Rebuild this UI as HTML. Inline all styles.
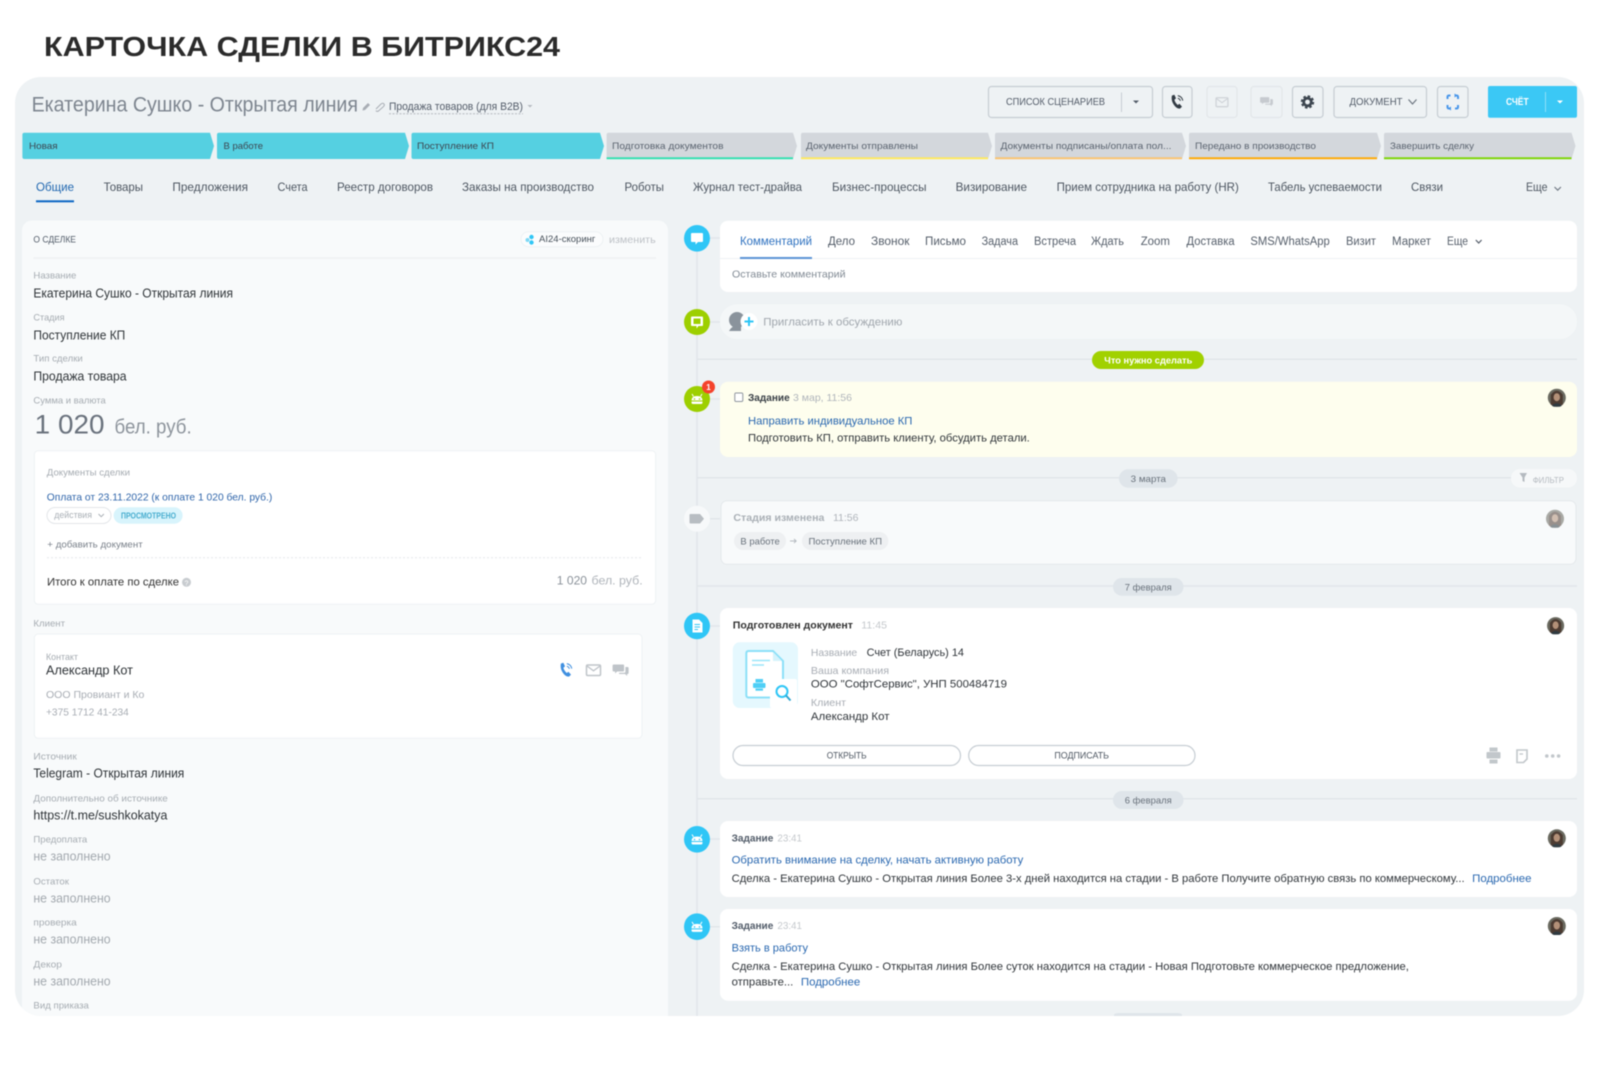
<!DOCTYPE html>
<html lang="ru"><head><meta charset="utf-8"><title>Карточка сделки</title>
<style>
html,body{margin:0;padding:0;background:#fff;width:1600px;height:1074px;overflow:hidden}
svg{display:block;filter:blur(.4px)}
text{font-family:"Liberation Sans","Noto Sans CJK SC",sans-serif;white-space:pre}
.lb{font-size:9.5px;fill:#a6acb2}
.v{font-size:12.5px;fill:#2f3438}
.n{font-size:12.5px;fill:#a2a8ae}
.st{font-size:9.5px;fill:#3c4650}
.tb{font-size:12px;fill:#4d5661}
.ct{font-size:11.5px;fill:#555e6a}
.t{font-size:11px;fill:#30353a}
.bl{font-size:11px;fill:#2a68b0}
.h{font-size:10.5px;font-weight:bold;fill:#3a4047}
.g{font-size:10.5px;fill:#b0b5bb}
.d{font-size:9.5px;fill:#68717b}
.bt{font-size:9.5px;fill:#4d5661}
</style></head><body>
<svg xmlns="http://www.w3.org/2000/svg" width="1600" height="1074" viewBox="0 0 1600 1074">
<defs>
<clipPath id="pc"><rect x="15" y="77" width="1569" height="939" rx="26"/></clipPath>
<g id="ph"><path d="M-5-6.5-2.6-7.2-1-3.6-2.6-2.2C-2.2-.2-.8 1.8.8 3L2.4 1.8 5 4.6 3 6.6C-1 7.2-6.8 0-5-6.5Z"/><path d="M.8-6.4A6.4 6.4 0 0 1 5.8-1.4M.8-3.8A3.8 3.8 0 0 1 3.4-1.2" fill="none" stroke="currentColor" stroke-width="1"/></g>
<g id="ml"><rect x="-7" y="-5" width="14" height="10.500" rx="1.200" fill="none" stroke="currentColor" stroke-width="1.500"/><path d="M-6.500-4 0 .8 6.500-4" fill="none" stroke="currentColor" stroke-width="1.300"/></g>
<g id="ch"><path d="M-7-5.500H2.500Q3.500-5.500 3.500-4.500V.5Q3.500 1.500 2.500 1.500H-3.500L-5.500 3.500V1.500H-7Q-8 1.500-8 .5V-4.500Q-8-5.500-7-5.500Z"/><path d="M4.800-3H7Q8-3 8-2V3Q8 4 7 4H6.500V6L4.500 4H-1.500V2.800H3.500Q4.800 2.800 4.800 1.500Z"/></g>
<g id="av"><circle r="9" fill="#6a6a60"/><path d="M-6 -3Q0-11 6-3L6 7Q0 10-6 7Z" fill="#4c3b32"/><ellipse cy="-.5" rx="3.200" ry="4" fill="#b39078"/><path d="M-5 8Q0 3 5 8L3 9H-3Z" fill="#2f3a40"/></g>
<g id="rb"><path d="M-5.500 1Q-5.500-3.500 0-3.500T5.500 1V3Q5.500 4.500 4 4.500H-4Q-5.500 4.500-5.500 3Z" fill="#fff"/><path d="M-3.500-3-5-5.500M3.500-3 5-5.500" stroke="#fff" stroke-width="1" fill="none"/><circle cx="-2.500" cy="-.5" r=".8" fill="currentColor"/><circle cx="2.500" cy="-.5" r=".8" fill="currentColor"/><rect x="-5.500" y="1" width="11" height="1" fill="currentColor"/></g>
</defs>

<text x="44" y="56" textLength="516" lengthAdjust="spacingAndGlyphs" font-size="28" font-weight="bold" fill="#2b2b2b">КАРТОЧКА СДЕЛКИ В БИТРИКС24</text>

<rect x="15" y="77" width="1569" height="939" rx="26" fill="#eef2f4"/>

<!-- header -->
<text x="31.600" y="111.700" textLength="326.400" lengthAdjust="spacingAndGlyphs" font-size="21" fill="#7d858f">Екатерина Сушко - Открытая линия</text>
<path d="M362.500 110.500 363 108 368 103 370 105 365 110Z" fill="#a8adb4"/>
<path d="M376 109 381 104Q383 102.500 384 104T383 107L378.500 111Q376.500 112 376 110.500" fill="none" stroke="#a8adb4" stroke-width="1"/>
<text x="389" y="110" textLength="134" lengthAdjust="spacingAndGlyphs" font-size="11" fill="#535c69">Продажа товаров (для B2B)</text>
<path d="M389 113.700H523" stroke="#b5bac0" stroke-width="1" stroke-dasharray="2 1.500"/>
<path d="M527.500 105h5l-2.500 2.500z" fill="#b5bac0"/>

<!-- top buttons -->
<g fill="none" stroke="#c6cdd3" stroke-width="1.200">
<rect x="988.500" y="86.500" width="164" height="31" rx="3"/>
<rect x="1162.500" y="86.500" width="29.500" height="31" rx="3"/>
<rect x="1207" y="86.500" width="30" height="31" rx="3" stroke="#e2e6e9"/>
<rect x="1251" y="86.500" width="31" height="31" rx="3" stroke="#e2e6e9"/>
<rect x="1292.500" y="86.500" width="30.500" height="31" rx="3"/>
<rect x="1334" y="86.500" width="92.500" height="31" rx="3"/>
<rect x="1437.500" y="86.500" width="30.500" height="31" rx="3"/>
</g>
<text x="1006" y="105" textLength="99" lengthAdjust="spacingAndGlyphs" font-size="10" fill="#535c69">СПИСОК СЦЕНАРИЕВ</text>
<path d="M1121.500 92.500V112" stroke="#c6cdd3"/>
<path d="M1133 100.500h6l-3 3z" fill="#535c69"/>
<use href="#ph" x="1177" y="102" fill="#333c45" color="#333c45"/>
<g transform="translate(1222 102) scale(.85)"><use href="#ml" color="#cfd3d8"/></g>
<g transform="translate(1266.500 101.500) scale(.8)"><use href="#ch" fill="#c6cacf"/></g>
<g transform="translate(1307.500 102)" fill="none" stroke="#3d4650"><circle r="3.800" stroke-width="2.800"/><circle r="5.400" stroke-width="2.600" stroke-dasharray="2.400 1.840"/></g>
<text x="1349.500" y="105" textLength="53" lengthAdjust="spacingAndGlyphs" font-size="10" fill="#535c69">ДОКУМЕНТ</text>
<path d="M1408.500 99.500l4 4.500 4-4.500" fill="none" stroke="#6d7681" stroke-width="1.200"/>
<path d="M1447.500 99V97Q1447.500 95.500 1449 95.500H1450.500M1455 95.500H1456.500Q1458 95.500 1458 97V99M1458 105V107Q1458 108.500 1456.500 108.500H1455M1450.500 108.500H1449Q1447.500 108.500 1447.500 107V105" fill="none" stroke="#4a97ea" stroke-width="2"/>
<path d="M1454.500 93.500v4l3-2zM1451 106.500v4l-3-2z" fill="#4a97ea"/>
<rect x="1488" y="86" width="89" height="31.700" rx="2" fill="#3bc8f5"/>
<text x="1506" y="105" textLength="22.600" lengthAdjust="spacingAndGlyphs" font-size="10" font-weight="bold" fill="#fff">СЧЁТ</text>
<path d="M1545.500 92V112" stroke="#8fe0f9"/>
<path d="M1557 100.500h6l-3 3z" fill="#fff"/>

<!-- stages -->
<g fill="#55d0e1">
<path d="M24.400 132.700H210L214 146 210 159H24.400Q22.400 159 22.400 157V134.700Q22.400 132.700 24.400 132.700Z"/>
<path d="M219 132.700H405L409 146 405 159H219Q217 159 217 157V134.700Q217 132.700 219 132.700Z"/>
<path d="M413.500 132.700H600L604 146 600 159H413.500Q411.500 159 411.500 157V134.700Q411.500 132.700 413.500 132.700Z"/>
</g>
<g fill="#d3d7dc">
<path d="M608.600 132.700H793L797 146 793 159H608.600Q606.600 159 606.600 157V134.700Q606.600 132.700 608.600 132.700Z"/>
<path d="M803 132.700H988L992 146 988 159H801V134.700Q801 132.700 803 132.700Z"/>
<path d="M997 132.700H1182L1186 146 1182 159H995V134.700Q995 132.700 997 132.700Z"/>
<path d="M1191 132.700H1377L1381 146 1377 159H1189V134.700Q1189 132.700 1191 132.700Z"/>
<path d="M1386 132.700H1571.500L1575.500 146 1571.500 159H1384V134.700Q1384 132.700 1386 132.700Z"/>
</g>
<rect x="606.600" y="157.300" width="186.400" height="1.900" fill="#2fe0b0"/>
<rect x="801" y="157.300" width="187" height="1.900" fill="#ffe95c"/>
<rect x="995" y="157.300" width="187" height="1.900" fill="#fbc36e"/>
<rect x="1189" y="157.300" width="188" height="1.900" fill="#ffa900"/>
<rect x="1384" y="157.300" width="187.500" height="1.900" fill="#7bd500"/>
<text class="st" x="29" y="149" textLength="28.600" lengthAdjust="spacingAndGlyphs">Новая</text>
<text class="st" x="223.500" y="149" textLength="39.500" lengthAdjust="spacingAndGlyphs">В работе</text>
<text class="st" x="417" y="149" textLength="77" lengthAdjust="spacingAndGlyphs">Поступление КП</text>
<text class="st" x="612" y="149" textLength="111.500" lengthAdjust="spacingAndGlyphs" style="fill:#5b6470">Подготовка документов</text>
<text class="st" x="806" y="149" textLength="112" lengthAdjust="spacingAndGlyphs" style="fill:#5b6470">Документы отправлены</text>
<text class="st" x="1000.500" y="149" textLength="171" lengthAdjust="spacingAndGlyphs" style="fill:#5b6470">Документы подписаны/оплата пол...</text>
<text class="st" x="1195" y="149" textLength="121" lengthAdjust="spacingAndGlyphs" style="fill:#5b6470">Передано в производство</text>
<text class="st" x="1390" y="149" textLength="84" lengthAdjust="spacingAndGlyphs" style="fill:#5b6470">Завершить сделку</text>

<!-- tabs -->
<text class="tb" x="36" y="191" textLength="38" lengthAdjust="spacingAndGlyphs" style="fill:#2067b0">Общие</text>
<rect x="36" y="200.300" width="38" height="2" fill="#0b66c3"/>
<text class="tb" x="103.600" y="191" textLength="39.400" lengthAdjust="spacingAndGlyphs">Товары</text>
<text class="tb" x="172.400" y="191" textLength="75.600" lengthAdjust="spacingAndGlyphs">Предложения</text>
<text class="tb" x="277.500" y="191" textLength="30.100" lengthAdjust="spacingAndGlyphs">Счета</text>
<text class="tb" x="337" y="191" textLength="96" lengthAdjust="spacingAndGlyphs">Реестр договоров</text>
<text class="tb" x="462" y="191" textLength="132" lengthAdjust="spacingAndGlyphs">Заказы на производство</text>
<text class="tb" x="624.500" y="191" textLength="39.500" lengthAdjust="spacingAndGlyphs">Роботы</text>
<text class="tb" x="693" y="191" textLength="109" lengthAdjust="spacingAndGlyphs">Журнал тест-драйва</text>
<text class="tb" x="832" y="191" textLength="94.500" lengthAdjust="spacingAndGlyphs">Бизнес-процессы</text>
<text class="tb" x="955.600" y="191" textLength="71.400" lengthAdjust="spacingAndGlyphs">Визирование</text>
<text class="tb" x="1056.600" y="191" textLength="182.200" lengthAdjust="spacingAndGlyphs">Прием сотрудника на работу (HR)</text>
<text class="tb" x="1268" y="191" textLength="114" lengthAdjust="spacingAndGlyphs">Табель успеваемости</text>
<text class="tb" x="1411" y="191" textLength="32" lengthAdjust="spacingAndGlyphs">Связи</text>
<text class="tb" x="1526" y="191" textLength="21.500" lengthAdjust="spacingAndGlyphs">Еще</text>
<path d="M1554.500 187l3.200 3.200 3.200-3.200" fill="none" stroke="#6d7681" stroke-width="1.100"/>

<!-- left card -->
<g clip-path="url(#pc)">
<rect x="22" y="220.500" width="646" height="830" rx="10" fill="#f8fafb"/>
</g>
<text x="33.400" y="242.700" textLength="42.600" lengthAdjust="spacingAndGlyphs" font-size="9.500" fill="#525c69">О СДЕЛКЕ</text>
<rect x="521" y="231.700" width="82" height="15" rx="7.500" fill="#fbfcfd" stroke="#eef2f4"/>
<circle cx="531.500" cy="237" r="2.200" fill="#2fc6f6"/><circle cx="527.500" cy="240" r="2" fill="#7fd9f5"/><circle cx="531.500" cy="242.500" r="2.200" fill="#2fc6f6"/>
<text x="539" y="242" textLength="56.400" lengthAdjust="spacingAndGlyphs" font-size="9.500" fill="#46505a">AI24-скоринг</text>
<text x="609" y="243" textLength="46.700" lengthAdjust="spacingAndGlyphs" font-size="10.500" fill="#bdc1c6">изменить</text>
<rect x="33.400" y="257.300" width="622.600" height="1.500" fill="#eef0f2"/>

<text class="lb" x="33.400" y="278.700" textLength="42.900" lengthAdjust="spacingAndGlyphs">Название</text>
<text class="v" x="33.400" y="297.300" textLength="199.600" lengthAdjust="spacingAndGlyphs">Екатерина Сушко - Открытая линия</text>
<text class="lb" x="33.400" y="320.700" textLength="31.200" lengthAdjust="spacingAndGlyphs">Стадия</text>
<text class="v" x="33.400" y="339.300" textLength="91.900" lengthAdjust="spacingAndGlyphs">Поступление КП</text>
<text class="lb" x="33.400" y="361.700" textLength="49.400" lengthAdjust="spacingAndGlyphs">Тип сделки</text>
<text class="v" x="33.400" y="380.700" textLength="93.200" lengthAdjust="spacingAndGlyphs">Продажа товара</text>
<text class="lb" x="33.400" y="403.700" textLength="72.400" lengthAdjust="spacingAndGlyphs">Сумма и валюта</text>
<text x="34.700" y="433.300" textLength="69.800" lengthAdjust="spacingAndGlyphs" font-size="26.500" fill="#6a727d">1 020</text>
<text x="114.500" y="433.300" textLength="77.200" lengthAdjust="spacingAndGlyphs" font-size="20" fill="#8d949c">бел. руб.</text>

<rect x="34.300" y="450.700" width="621.400" height="153.600" rx="4" fill="#fff" stroke="#eef2f4"/>
<text class="lb" x="46.800" y="475.700" textLength="83.200" lengthAdjust="spacingAndGlyphs">Документы сделки</text>
<text x="46.800" y="500.300" textLength="225.500" lengthAdjust="spacingAndGlyphs" font-size="10.500" fill="#2f65aa">Оплата от 23.11.2022 (к оплате 1 020 бел. руб.)</text>
<rect x="47" y="507.500" width="64" height="16" rx="8" fill="#fff" stroke="#e3e6e9"/>
<text x="54.200" y="518" textLength="37.800" lengthAdjust="spacingAndGlyphs" font-size="9.500" fill="#aab0b6">действия</text>
<path d="M98.500 514l2.700 2.700 2.700-2.700" fill="none" stroke="#aab0b6"/>
<rect x="113.600" y="507.300" width="69" height="16.400" rx="8.200" fill="#d8f4fc"/>
<text x="121" y="518.500" textLength="55" lengthAdjust="spacingAndGlyphs" font-size="8.500" font-weight="bold" fill="#47adcf">ПРОСМОТРЕНО</text>
<text x="47.300" y="547.700" textLength="95.400" lengthAdjust="spacingAndGlyphs" font-size="9.500" fill="#7b828b">+ добавить документ</text>
<path d="M47 557.700H642.700" stroke="#e6e8ea" stroke-dasharray="2 2"/>
<text x="47" y="585.300" textLength="132" lengthAdjust="spacingAndGlyphs" font-size="11" fill="#333">Итого к оплате по сделке</text>
<circle cx="186.500" cy="582.300" r="4.500" fill="#c8ccd0"/>
<text x="186.500" y="585.300" text-anchor="middle" font-size="7" fill="#fff">?</text>
<text x="556.800" y="584.700" textLength="30.200" lengthAdjust="spacingAndGlyphs" font-size="12" fill="#8b929a">1 020</text>
<text x="591.500" y="584.700" textLength="51.200" lengthAdjust="spacingAndGlyphs" font-size="12" fill="#b0b5bb">бел. руб.</text>

<text class="lb" x="33.400" y="626.700" textLength="31.600" lengthAdjust="spacingAndGlyphs">Клиент</text>
<rect x="34.300" y="634" width="607.700" height="104.300" rx="4" fill="#fff" stroke="#eef2f4"/>
<text class="lb" x="46" y="660" textLength="32" lengthAdjust="spacingAndGlyphs">Контакт</text>
<text class="v" x="46" y="674.700" textLength="87" lengthAdjust="spacingAndGlyphs">Александр Кот</text>
<text x="46" y="698" textLength="98.400" lengthAdjust="spacingAndGlyphs" font-size="10.500" fill="#a8adb4">ООО Провиант и Ко</text>
<text x="46" y="715.300" textLength="82.800" lengthAdjust="spacingAndGlyphs" font-size="10.500" fill="#a8adb4">+375 1712 41-234</text>
<use href="#ph" x="566" y="670" fill="#3f8fe0" color="#3f8fe0"/>
<use href="#ml" x="593.500" y="670" color="#bfc4c9"/>
<use href="#ch" x="620.600" y="670" fill="#bfc4c9"/>

<text class="lb" x="33.400" y="759.300" textLength="43.400" lengthAdjust="spacingAndGlyphs">Источник</text>
<text class="v" x="33.400" y="777.700" textLength="150.900" lengthAdjust="spacingAndGlyphs">Telegram - Открытая линия</text>
<text class="lb" x="33.400" y="801.700" textLength="134.400" lengthAdjust="spacingAndGlyphs">Дополнительно об источнике</text>
<text class="v" x="33.400" y="819.300" textLength="134" lengthAdjust="spacingAndGlyphs">https://t.me/sushkokatya</text>
<text class="lb" x="33.400" y="842.300" textLength="53.800" lengthAdjust="spacingAndGlyphs">Предоплата</text>
<text class="n" x="33.400" y="860.700" textLength="77.200" lengthAdjust="spacingAndGlyphs">не заполнено</text>
<text class="lb" x="33.400" y="884.700" textLength="35.600" lengthAdjust="spacingAndGlyphs">Остаток</text>
<text class="n" x="33.400" y="902.700" textLength="77.200" lengthAdjust="spacingAndGlyphs">не заполнено</text>
<text class="lb" x="33.400" y="925.300" textLength="43.400" lengthAdjust="spacingAndGlyphs">проверка</text>
<text class="n" x="33.400" y="943.700" textLength="77.200" lengthAdjust="spacingAndGlyphs">не заполнено</text>
<text class="lb" x="33.400" y="967.300" textLength="28.600" lengthAdjust="spacingAndGlyphs">Декор</text>
<text class="n" x="33.400" y="985.700" textLength="77.200" lengthAdjust="spacingAndGlyphs">не заполнено</text>
<text class="lb" x="33.400" y="1008.300" textLength="55.500" lengthAdjust="spacingAndGlyphs">Вид приказа</text>

<!-- timeline lines -->
<path d="M697 232V1016" stroke="#e1e6ea" stroke-width="1.500"/>
<g stroke="#e1e6ea" stroke-width="1.500">
<path d="M697 359.300H1577M697 477.700H1577M697 586H1577M697 798.700H1577"/>
<path d="M708 238H720M708 322H720M708 399H720M708 518.700H720M708 626H720M708 839H720M708 926.700H720"/>
</g>

<!-- composer -->
<rect x="720" y="220.700" width="857" height="71.300" rx="8" fill="#fff"/>
<rect x="720" y="258" width="857" height="1" fill="#eef2f4"/>
<rect x="740" y="257" width="72" height="2" fill="#5b93d6"/>
<ellipse cx="697" cy="238.300" rx="13" ry="13.300" fill="#2fc6f6"/>
<path d="M692 233H702Q703 233 703 234V241Q703 242 702 242H698L695.500 244.500V242H692Q691 242 691 241V234Q691 233 692 233Z" fill="#fff"/>
<text class="ct" x="740" y="245" textLength="72" lengthAdjust="spacingAndGlyphs" style="fill:#2f72c0">Комментарий</text>
<text class="ct" x="828" y="245" textLength="27" lengthAdjust="spacingAndGlyphs">Дело</text>
<text class="ct" x="871" y="245" textLength="38.500" lengthAdjust="spacingAndGlyphs">Звонок</text>
<text class="ct" x="925" y="245" textLength="41" lengthAdjust="spacingAndGlyphs">Письмо</text>
<text class="ct" x="981.600" y="245" textLength="36.400" lengthAdjust="spacingAndGlyphs">Задача</text>
<text class="ct" x="1034" y="245" textLength="42" lengthAdjust="spacingAndGlyphs">Встреча</text>
<text class="ct" x="1091" y="245" textLength="33" lengthAdjust="spacingAndGlyphs">Ждать</text>
<text class="ct" x="1140.700" y="245" textLength="29.300" lengthAdjust="spacingAndGlyphs">Zoom</text>
<text class="ct" x="1186.500" y="245" textLength="48.100" lengthAdjust="spacingAndGlyphs">Доставка</text>
<text class="ct" x="1250.400" y="245" textLength="79.300" lengthAdjust="spacingAndGlyphs">SMS/WhatsApp</text>
<text class="ct" x="1346" y="245" textLength="30" lengthAdjust="spacingAndGlyphs">Визит</text>
<text class="ct" x="1392" y="245" textLength="39" lengthAdjust="spacingAndGlyphs">Маркет</text>
<text class="ct" x="1447" y="245" textLength="21" lengthAdjust="spacingAndGlyphs">Еще</text>
<path d="M1475.800 240l2.900 3 2.900-3" fill="none" stroke="#535c69" stroke-width="1.200"/>
<text x="732" y="277.700" textLength="113.500" lengthAdjust="spacingAndGlyphs" font-size="10.500" fill="#828b95">Оставьте комментарий</text>

<!-- invite -->
<rect x="720" y="304.300" width="857" height="34.700" rx="17" fill="#f4f7f8"/>
<ellipse cx="697" cy="322" rx="13" ry="13" fill="#9dcf00"/>
<path d="M692 316.500H702Q703 316.500 703 317.500V325Q703 326 702 326H698.500L696.500 328.500V326H692Q691 326 691 325V317.500Q691 316.500 692 316.500Z" fill="#fff"/>
<path d="M693.500 318.500H700.500V324H693.500Z" fill="#9dcf00"/>
<circle cx="737" cy="320" r="8" fill="#8a939c"/><path d="M729 331Q733 324 741 325V331Z" fill="#8a939c"/>
<circle cx="749" cy="321.500" r="8.500" fill="#fff"/>
<path d="M749 317V326M744.500 321.500H753.500" stroke="#2fc6f6" stroke-width="2"/>
<text x="763.300" y="325.700" textLength="139.100" lengthAdjust="spacingAndGlyphs" font-size="11" fill="#a0a6ad">Пригласить к обсуждению</text>

<!-- green pill -->
<rect x="1092" y="351" width="112" height="18" rx="9" fill="#a1d100"/>
<text x="1104.300" y="363.700" textLength="88" lengthAdjust="spacingAndGlyphs" font-size="9.500" font-weight="bold" fill="#fff">Что нужно сделать</text>

<!-- yellow task -->
<rect x="720" y="381.700" width="857" height="75.300" rx="8" fill="#fefeee"/>
<ellipse cx="697" cy="399" rx="13" ry="13" fill="#9dcf00"/>
<use href="#rb" x="697" y="399.500" color="#9dcf00"/>
<circle cx="708.500" cy="387" r="6.500" fill="#f4432c"/>
<text x="708.500" y="390" text-anchor="middle" font-size="8" font-weight="bold" fill="#fff">1</text>
<rect x="734.800" y="393" width="8" height="8.500" rx="1.200" fill="#fff" stroke="#8f969e" stroke-width="1"/>
<text class="h" x="748" y="401" textLength="41.700" lengthAdjust="spacingAndGlyphs">Задание</text>
<text class="g" x="793" y="401" textLength="59" lengthAdjust="spacingAndGlyphs">3 мар, 11:56</text>
<use href="#av" x="1556.800" y="397.700"/>
<text class="bl" x="748" y="424.300" textLength="164.400" lengthAdjust="spacingAndGlyphs">Направить индивидуальное КП</text>
<text class="t" x="748" y="441.700" textLength="281.800" lengthAdjust="spacingAndGlyphs">Подготовить КП, отправить клиенту, обсудить детали.</text>

<!-- 3 марта -->
<rect x="1119" y="469.300" width="58.600" height="18.400" rx="9.200" fill="#dfe5ea"/>
<text class="d" x="1130.700" y="482" textLength="35.300" lengthAdjust="spacingAndGlyphs">3 марта</text>
<rect x="1511" y="469" width="66" height="18.500" rx="9" fill="#f6f8f9"/>
<path d="M1519.500 473H1527L1524.500 477.500V482L1522.500 481V477.500Z" fill="#b5bac0"/>
<text x="1532.700" y="483" textLength="31.300" lengthAdjust="spacingAndGlyphs" font-size="8" fill="#b5bac0">ФИЛЬТР</text>

<!-- stage change -->
<rect x="721" y="500.700" width="855" height="63.600" rx="6" fill="#f8fafb" stroke="#e4e8eb"/>
<ellipse cx="697" cy="518.700" rx="13" ry="13" fill="#f7f9fa"/>
<path d="M690.500 514H700L704 518.700 700 523.500H690.500Q689.500 523.500 689.500 522.500V515Q689.500 514 690.500 514Z" fill="#b8bdc2"/>
<text x="733.400" y="521" textLength="91" lengthAdjust="spacingAndGlyphs" font-size="10.500" font-weight="bold" fill="#aab0b6">Стадия изменена</text>
<text class="g" x="833" y="521" textLength="25.400" lengthAdjust="spacingAndGlyphs">11:56</text>
<g opacity=".55"><use href="#av" x="1555" y="518.700"/></g>
<rect x="734" y="532" width="52" height="18" rx="9" fill="#eef0f2"/>
<text class="d" x="740.400" y="544.700" textLength="39.400" lengthAdjust="spacingAndGlyphs">В работе</text>
<path d="M790 541H796M794 539l2.200 2-2.200 2" fill="none" stroke="#b5bac0" stroke-width=".9"/>
<rect x="802" y="532" width="86.300" height="18" rx="9" fill="#eef0f2"/>
<text class="d" x="808.500" y="544.700" textLength="73.500" lengthAdjust="spacingAndGlyphs">Поступление КП</text>

<!-- 7 февраля -->
<rect x="1113" y="578" width="70.500" height="17.700" rx="8.800" fill="#dfe5ea"/>
<text class="d" x="1124.800" y="590.500" textLength="47" lengthAdjust="spacingAndGlyphs">7 февраля</text>

<!-- doc card -->
<rect x="720" y="608" width="857" height="171" rx="8" fill="#fff"/>
<ellipse cx="697" cy="626" rx="13" ry="13.300" fill="#2fc6f6"/>
<path d="M692.500 619.500H699L702.500 623V632.500H692.500Z" fill="#fff"/>
<path d="M694.500 624.500H700M694.500 627H700M694.500 629.500H698" stroke="#2fc6f6" stroke-width="1"/>
<text class="h" x="732.800" y="628.300" textLength="120.200" lengthAdjust="spacingAndGlyphs" style="fill:#333">Подготовлен документ</text>
<text class="g" x="861.300" y="628.300" textLength="25.700" lengthAdjust="spacingAndGlyphs" style="fill:#c4c8cc">11:45</text>
<g transform="translate(1555.600 625.700) scale(.95)"><use href="#av"/></g>
<rect x="732.800" y="642.300" width="65.200" height="65.700" rx="7" fill="#e5f8fe"/>
<path d="M748.500 651H773L783 661V695Q783 697.500 780.500 697.500H748.500Q746.300 697.500 746.300 695V653.500Q746.300 651 748.500 651Z" fill="#fff" stroke="#8ce0f8" stroke-width="2"/>
<path d="M773 652V661H782Z" fill="#d5f3fc"/>
<path d="M752 660.500H770M752 665H764" stroke="#9ae6fa" stroke-width="1.600"/>
<rect x="755.500" y="679" width="7.500" height="3.500" fill="#4fcff6"/><rect x="753" y="683" width="12.500" height="5" rx="1" fill="#4fcff6"/><rect x="755.500" y="688.500" width="7.500" height="2.200" fill="#4fcff6"/>
<rect x="770" y="679" width="27" height="29" rx="2" fill="#fff"/>
<circle cx="782" cy="691.500" r="5.500" fill="none" stroke="#2fc6f6" stroke-width="2"/>
<path d="M786 695.500 790.500 700.500" stroke="#2fa6d1" stroke-width="2"/>
<text class="g" x="810.900" y="656" textLength="46.300" lengthAdjust="spacingAndGlyphs" style="fill:#a8adb4">Название</text>
<text class="t" x="866.600" y="656" textLength="97.400" lengthAdjust="spacingAndGlyphs">Счет (Беларусь) 14</text>
<text class="g" x="810.900" y="674" textLength="78.100" lengthAdjust="spacingAndGlyphs" style="fill:#a8adb4">Ваша компания</text>
<text class="t" x="810.900" y="687.300" textLength="196.100" lengthAdjust="spacingAndGlyphs">ООО "СофтСервис", УНП 500484719</text>
<text class="g" x="810.900" y="706" textLength="35.100" lengthAdjust="spacingAndGlyphs" style="fill:#a8adb4">Клиент</text>
<text class="t" x="810.900" y="720" textLength="78.600" lengthAdjust="spacingAndGlyphs">Александр Кот</text>
<rect x="733" y="745.500" width="227.500" height="20" rx="10" fill="#fff" stroke="#c6cdd3" stroke-width="1.200"/>
<rect x="968.700" y="745.500" width="226.300" height="20" rx="10" fill="#fff" stroke="#c6cdd3" stroke-width="1.200"/>
<text class="bt" x="826.700" y="758.300" textLength="39.900" lengthAdjust="spacingAndGlyphs">ОТКРЫТЬ</text>
<text class="bt" x="1054.400" y="758.300" textLength="54.600" lengthAdjust="spacingAndGlyphs">ПОДПИСАТЬ</text>
<g fill="#c2c7cb"><rect x="1489.500" y="747.500" width="8" height="4"/><rect x="1486.500" y="752" width="14" height="6.500" rx="1"/><rect x="1489.500" y="759.500" width="8" height="4"/>
<circle cx="1546.800" cy="756" r="1.800"/><circle cx="1552.700" cy="756" r="1.800"/><circle cx="1558.600" cy="756" r="1.800"/></g>
<path d="M1517 750H1527V759L1523.500 762.500H1517Z" fill="none" stroke="#c2c7cb" stroke-width="1.600"/><path d="M1519.500 754H1523" stroke="#c2c7cb" stroke-width="1.300"/>

<!-- 6 февраля -->
<rect x="1113" y="791" width="70.500" height="18" rx="9" fill="#dfe5ea"/>
<text class="d" x="1124.800" y="803.300" textLength="47" lengthAdjust="spacingAndGlyphs">6 февраля</text>

<!-- task cards -->
<rect x="720" y="821" width="857" height="76" rx="8" fill="#fff"/>
<ellipse cx="697" cy="839.300" rx="13" ry="13.300" fill="#2fc6f6"/>
<use href="#rb" x="697" y="840" color="#2fc6f6"/>
<text class="h" x="731.600" y="841.300" textLength="41.700" lengthAdjust="spacingAndGlyphs" style="fill:#525c69">Задание</text>
<text class="g" x="777.400" y="841.300" textLength="24.600" lengthAdjust="spacingAndGlyphs" style="fill:#c4c8cc">23:41</text>
<use href="#av" x="1556.800" y="838.300"/>
<text class="bl" x="731.600" y="863.700" textLength="291.700" lengthAdjust="spacingAndGlyphs">Обратить внимание на сделку, начать активную работу</text>
<text class="t" x="731.600" y="882" textLength="733" lengthAdjust="spacingAndGlyphs">Сделка - Екатерина Сушко - Открытая линия Более 3-х дней находится на стадии - В работе Получите обратную связь по коммерческому...</text>
<text class="bl" x="1472.200" y="882" textLength="59.300" lengthAdjust="spacingAndGlyphs">Подробнее</text>

<rect x="720" y="909" width="857" height="91.700" rx="8" fill="#fff"/>
<ellipse cx="697" cy="926.700" rx="13" ry="13.300" fill="#2fc6f6"/>
<use href="#rb" x="697" y="927.400" color="#2fc6f6"/>
<text class="h" x="731.600" y="929" textLength="41.700" lengthAdjust="spacingAndGlyphs" style="fill:#525c69">Задание</text>
<text class="g" x="777.400" y="929" textLength="24.600" lengthAdjust="spacingAndGlyphs" style="fill:#c4c8cc">23:41</text>
<use href="#av" x="1556.800" y="926"/>
<text class="bl" x="731.600" y="951.700" textLength="76.400" lengthAdjust="spacingAndGlyphs">Взять в работу</text>
<text class="t" x="731.600" y="970" textLength="677.300" lengthAdjust="spacingAndGlyphs">Сделка - Екатерина Сушко - Открытая линия Более суток находится на стадии - Новая Подготовьте коммерческое предложение,</text>
<text class="t" x="731.600" y="985.700" textLength="61.700" lengthAdjust="spacingAndGlyphs">отправьте...</text>
<text class="bl" x="800.900" y="985.700" textLength="59.300" lengthAdjust="spacingAndGlyphs">Подробнее</text>
<path d="M1114 1016V1015Q1114 1013 1120 1013H1176Q1182 1013 1182 1015V1016Z" fill="#dfe5ea"/>
</svg>
</body></html>
